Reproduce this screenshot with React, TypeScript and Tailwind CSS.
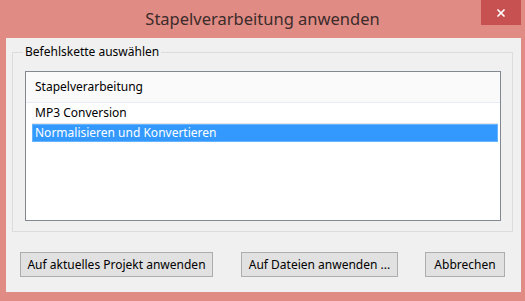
import { X } from 'lucide-react';

export default function App() {
  const rows = [
    { id: 1, label: 'MP3 Conversion', selected: false },
    { id: 2, label: 'Normalisieren und Konvertieren', selected: true },
  ];

  return (
    <div
      className="w-[525px] h-[301px] bg-[#e08b84] flex flex-col overflow-hidden"
      style={{ fontFamily: '"Noto Sans", "Open Sans", sans-serif' }}
    >
      {/* Title bar */}
      <div className="h-[38px] flex items-start relative">
        <div className="flex-1 text-center pt-[8px] text-[16.5px] leading-[22px] text-[#3b2b2b]">
          Stapelverarbeitung anwenden
        </div>
        <div className="absolute right-[4px] top-0 w-[40px] h-[25px] bg-[#c75050] flex items-center justify-center">
          <X className="w-[12px] h-[12px] text-white" strokeWidth={3.5} />
        </div>
      </div>

      {/* Client area */}
      <div className="ml-[6px] w-[515px] h-[254px] bg-[#f0f0f0] flex flex-col pl-[6px] pt-[14px]">
        {/* Group box */}
        <div className="relative border border-[#dcdcdc] w-[501px] h-[180px] pt-[18px] pl-[12px]">
          <span className="absolute -top-[9px] left-[10px] px-[2px] bg-[#f0f0f0] text-[12px] leading-[16px] text-black">
            Befehlskette auswählen
          </span>
          <div className="w-[476px] h-[150px] bg-white border border-[#828790] flex flex-col">
            <div className="h-[31px] bg-[#fafafa] border-b border-[#e5eef8] flex items-center pl-[9px] text-[12px] text-black">
              Stapelverarbeitung
            </div>
            {rows.map((row) =>
              row.selected ? (
                <div
                  key={row.id}
                  className="h-[18px] ml-[6px] mr-[2px] flex items-center pl-[2px] text-[12px] bg-[#3399ff] border border-[#66b3ff] text-white"
                >
                  {row.label}
                </div>
              ) : (
                <div
                  key={row.id}
                  className="h-[21px] flex items-center text-[12px] text-black"
                >
                  <div className="flex-1 h-full ml-[6px] mr-[2px] pl-[3px] flex items-center border-b border-[#e6e6e6]">
                    {row.label}
                  </div>
                </div>
              )
            )}
          </div>
        </div>

        {/* Buttons */}
        <div className="flex items-center mt-[20px] pl-[8px]">
          <button className="w-[193px] h-[25px] bg-[#e1e1e1] border border-[#adadad] text-[12px] text-black">
            Auf aktuelles Projekt anwenden
          </button>
          <button className="ml-[28px] w-[157px] h-[25px] bg-[#e1e1e1] border border-[#adadad] text-[12px] text-black">
            Auf Dateien anwenden ...
          </button>
          <button className="ml-[27px] w-[80px] h-[25px] bg-[#e1e1e1] border border-[#adadad] text-[12px] text-black">
            Abbrechen
          </button>
        </div>
      </div>
    </div>
  );
}
